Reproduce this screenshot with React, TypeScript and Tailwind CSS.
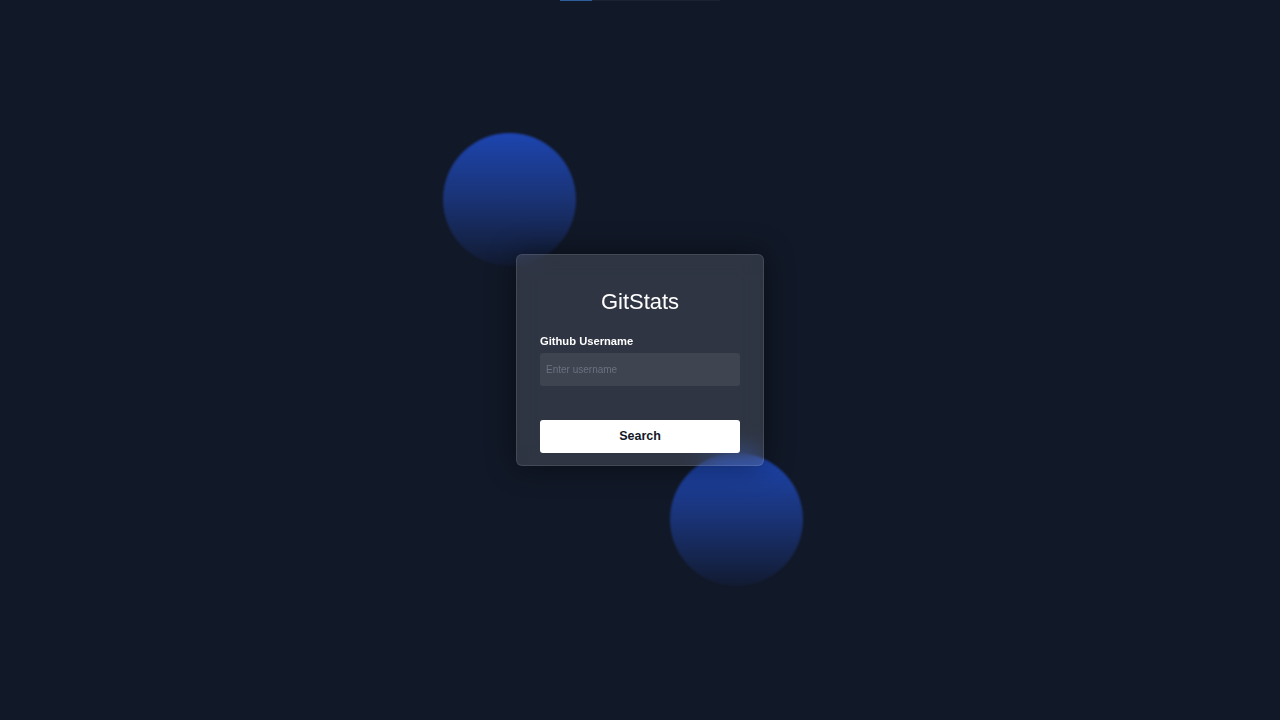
import React, { useState } from 'react';

const App: React.FC = () => {
  const [username, setUsername] = useState('');

  return (
    <div
      className="relative min-h-screen w-full overflow-hidden bg-[#111827] flex items-center justify-center"
      style={{ fontFamily: '"Liberation Sans", Arial, sans-serif' }}
    >
      {/* Top loading bar */}
      <div className="absolute top-0 left-1/2 -translate-x-1/2 w-[160px] h-px bg-[#1c2230] flex">
        <div className="w-[32px] h-full bg-[#2f5d9c]" />
      </div>

      <div className="relative">
        {/* Decorative orbs */}
        <div className="absolute left-[-73px] top-[-121px] w-[133px] h-[133px] rounded-full blur-[1px] bg-gradient-to-b from-[#1d45b0] via-[#1a3375] to-[#131d3a]/60" />
        <div className="absolute left-[154px] top-[199px] w-[133px] h-[133px] rounded-full blur-[1px] bg-gradient-to-b from-[#1d45b0] via-[#1a3375] to-[#131d3a]/60" />

        {/* Card */}
        <div className="relative w-[248px] rounded-md border border-white/10 bg-white/[0.13] backdrop-blur-md shadow-[0_0_30px_rgba(0,0,0,0.45)] px-[23px] pt-[34px] pb-[12px]">
          <h1 className="text-center text-[22px] leading-[26px] text-white">GitStats</h1>

          <label className="block mt-[20px] text-[11.2px] leading-[13px] font-bold text-white">
            Github Username
          </label>
          <input
            value={username}
            onChange={(e) => setUsername(e.target.value)}
            placeholder="Enter username"
            className="mt-[5px] w-full h-[33px] rounded-[3px] bg-white/[0.07] px-[6px] text-[10px] text-white placeholder:text-[#6b7280] outline-none"
          />

          <button className="mt-[34px] w-full h-[33px] rounded-[3px] bg-white text-[12.5px] font-bold text-[#111827]">
            Search
          </button>
        </div>
      </div>
    </div>
  );
};

export default App;
